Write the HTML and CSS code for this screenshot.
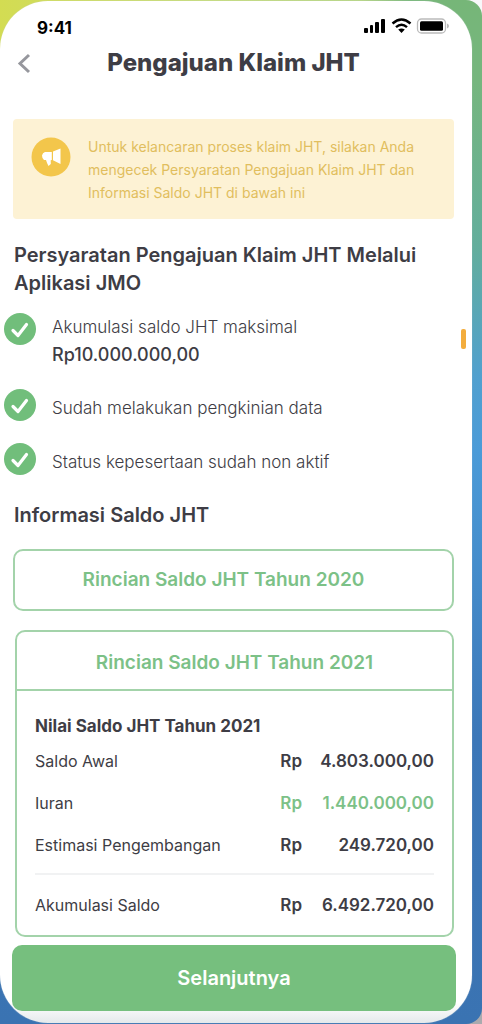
FILE: index.html
```html
<!DOCTYPE html>
<html lang="id">
<head>
<meta charset="utf-8">
<meta name="viewport" content="width=device-width, initial-scale=1">
<title>Pengajuan Klaim JHT</title>
<link rel="stylesheet" href="styles.css">
</head>
<body>
<div class="frame">
<main class="screen">
  <div class="status">
    <span class="time">9:41</span>
    <svg class="status-icons" width="86" height="18" viewBox="0 0 86 18" aria-hidden="true">
      <rect x="1" y="11" width="4" height="5" rx="1"/>
      <rect x="7" y="8" width="3" height="8" rx="1"/>
      <rect x="12" y="5" width="4" height="11" rx="1"/>
      <rect x="18" y="2" width="4" height="14" rx="1"/>
      <g fill="none" stroke="#000" stroke-width="2.4">
        <path d="M29.500 6.500Q38.500-1.500 47.500 6.500"/>
        <path d="M33 10.200Q38.500 5.200 44 10.200"/>
      </g>
      <path d="M38.500 16l-3.300-3.400q3.300-2.400 6.600 0z"/>
      <rect x="54.500" y="2" width="28" height="14" rx="4" fill="#fff" stroke="#bbb" stroke-width="1.300"/>
      <rect x="57" y="4.300" width="23" height="9.400" rx="1.500"/>
      <path d="M84 6.500q2 .6 2 2.500t-2 2.500z" fill="#bbb"/>
    </svg>
  </div>
  <header class="titlebar">
    <button class="back" type="button" aria-label="Kembali">
      <svg width="14" height="22" viewBox="0 0 14 22"><path d="M12 3L3 11.500 12 20" fill="none" stroke="#96979d" stroke-width="3"/></svg>
    </button>
    <h1>Pengajuan Klaim JHT</h1>
  </header>

  <section class="notice">
    <svg class="horn" width="40" height="40" viewBox="0 0 40 40" aria-hidden="true">
      <circle cx="20" cy="20" r="19.500" fill="#f3c64b"/>
      <path d="M22 14.500L29.500 11.500V27L22 23.300z" fill="#fff"/>
      <path d="M20.800 15V23L19.700 23.300 19.800 27 17.500 29Q16 26.500 15 23H13Q11 21.500 11 18.500 11.500 15.500 14 15z" fill="#fff"/>
    </svg>
    <p>Untuk kelancaran proses klaim JHT, silakan Anda mengecek Persyaratan Pengajuan Klaim JHT dan Informasi Saldo JHT di bawah ini</p>
  </section>

  <h2>Persyaratan Pengajuan Klaim JHT Melalui Aplikasi JMO</h2>
  <ul class="checks">
    <li>
      <svg width="32" height="32" viewBox="0 0 32 32" aria-hidden="true"><circle cx="16" cy="16" r="16" fill="#71be7b"/><path d="M9 17.500L14 22.500 22.500 11.500" fill="none" stroke="#fff" stroke-width="3.200" stroke-linecap="round" stroke-linejoin="round"/></svg>
      <p>Akumulasi saldo JHT maksimal <strong>Rp10.000.000,00</strong></p>
    </li>
    <li>
      <svg width="32" height="32" viewBox="0 0 32 32" aria-hidden="true"><circle cx="16" cy="16" r="16" fill="#71be7b"/><path d="M9 17.500L14 22.500 22.500 11.500" fill="none" stroke="#fff" stroke-width="3.200" stroke-linecap="round" stroke-linejoin="round"/></svg>
      <p class="single">Sudah melakukan pengkinian data</p>
    </li>
    <li>
      <svg width="32" height="32" viewBox="0 0 32 32" aria-hidden="true"><circle cx="16" cy="16" r="16" fill="#71be7b"/><path d="M9 17.500L14 22.500 22.500 11.500" fill="none" stroke="#fff" stroke-width="3.200" stroke-linecap="round" stroke-linejoin="round"/></svg>
      <p class="single">Status kepesertaan sudah non aktif</p>
    </li>
  </ul>

  <h2 class="info">Informasi Saldo JHT</h2>
  <button class="year closed" type="button" aria-expanded="false">Rincian Saldo JHT Tahun 2020</button>
  <section class="card">
    <button class="year open" type="button" aria-expanded="true">Rincian Saldo JHT Tahun 2021</button>
    <div class="details">
      <h3 id="balance">Nilai Saldo JHT Tahun 2021</h3>
      <table aria-labelledby="balance">
        <tbody>
          <tr><th scope="row">Saldo Awal</th><td>Rp</td><td class="amount">4.803.000,00</td></tr>
          <tr class="plus"><th scope="row">Iuran</th><td>Rp</td><td class="amount">1.440.000,00</td></tr>
          <tr><th scope="row">Estimasi Pengembangan</th><td>Rp</td><td class="amount">249.720,00</td></tr>
        </tbody>
        <tfoot>
          <tr><th scope="row">Akumulasi Saldo</th><td>Rp</td><td class="amount">6.492.720,00</td></tr>
        </tfoot>
      </table>
    </div>
  </section>
  <button class="next" type="button">Selanjutnya</button>
  <span class="scroll-mark"></span>
</main>
</div>
</body>
</html>
```

FILE: styles.css
```css
* { box-sizing: border-box; }

body {
  margin: 0;
  background: linear-gradient(#f8f8fa 50%, #aaaaae 50%);
  color: #3e3d45;
  font-family: Inter, "Liberation Sans", sans-serif;
}

h1, h2, h3, p, ul { margin: 0; padding: 0; }
button { font: inherit; cursor: pointer; }

.frame {
  min-height: 100vh;
  padding: 1px 10px 1px 0;
  border-radius: 0 16px 16px 0;
  background:
    linear-gradient(90deg, #d3dc52, #c5dc7c 45%, #b5d582 75%, transparent 85%) top / 100% 80px no-repeat,
    linear-gradient(#76b678 0, #76b67e 8%, #63ae9c 24%, #51a0cf 37%, #4b9bd8 44%, #3c77b8 72%, #3a73b2 100%);
}

.screen {
  position: relative;
  min-height: calc(100vh - 2px);
  padding: 13px 18px 12px 13px;
  border-radius: 48px;
  background: linear-gradient(#fff 98%, #e5e9eb);
  box-shadow: 0 0 1px #ccd5d8;
}

.status {
  display: flex;
  justify-content: space-between;
  height: 33px;
  padding: 3px 5px 0 24px;
}
.time { color: #000; font-size: 17px; font-weight: 700; line-height: 22px; }

.titlebar {
  display: grid;
  grid-template-columns: 24px 1fr 24px;
  align-items: center;
}
.back { display: flex; padding: 0 0 0 4px; border: 0; background: none; }
h1 { font-size: 24px; font-weight: 800; line-height: 32px; text-align: center; }

.notice {
  display: flex;
  gap: 17px;
  margin-top: 40px;
  padding: 16px 18px 15px;
  border-radius: 4px;
  background: #fdf2d4;
  color: #e1be5e;
  font-size: 14px;
  line-height: 23px;
}
.horn { flex: none; margin-top: 2px; }

h2 { margin-top: 22px; padding-left: 1px; font-size: 20px; font-weight: 600; line-height: 28px; }

.checks {
  display: flex;
  flex-direction: column;
  gap: 21px;
  margin: 16px 0 0 -9px;
  list-style: none;
}
.checks li { display: flex; gap: 16px; font-size: 17px; font-weight: 300; line-height: 27px; }
.checks svg { flex: none; }
.checks p { padding-top: 1px; }
.checks strong { display: block; font-size: 18px; font-weight: 500; }
.checks .single { padding-top: 6px; }
.info { margin-top: 25px; }

.year {
  display: block;
  width: 100%;
  border: 0 solid #a3d3aa;
  background: none;
  color: #7cc187;
  font-size: 19px;
  font-weight: 600;
  line-height: 24px;
}
.closed {
  height: 62px;
  margin-top: 20px;
  padding: 0 20px 0 0;
  border-width: 2px;
  border-radius: 10px;
}
.card {
  margin: 19px 0 0 2px;
  border: 2px solid #a3d3aa;
  border-radius: 10px;
}
.open { height: 59px; padding: 4px 0 0; border-bottom-width: 2px; }
.details { padding: 21px 18px 0; }
h3 { font-size: 17px; font-weight: 700; line-height: 28px; }

table { width: 100%; border-collapse: collapse; font-size: 17px; line-height: 24px; }
th { padding: 0; font-size: 16px; font-weight: 400; text-align: left; }
td { padding: 0; font-weight: 600; }
tr { height: 42px; }
.plus td { color: #7cc187; }
.amount { width: 125px; text-align: right; }
tfoot::before { content: ""; display: table-row; height: 8px; }
tfoot tr { height: 61px; border-top: 2px solid #f1f2f3; }

.next {
  width: calc(100% + 3px);
  height: 66px;
  margin: 8px 0 0 -1px;
  border: 0;
  border-radius: 10px;
  background: #76bf7e;
  color: #fff;
  font-size: 20px;
  font-weight: 600;
}

.scroll-mark {
  position: absolute;
  top: 328px;
  right: 6px;
  width: 5px;
  height: 20px;
  border-radius: 2px;
  background: #f3ad3d;
}
```
